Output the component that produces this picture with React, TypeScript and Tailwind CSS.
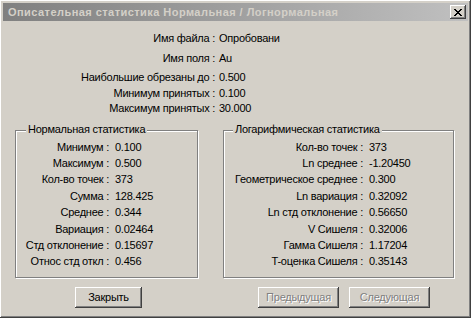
const raised =
  "shadow-[inset_-1px_-1px_0_#404040,inset_1px_1px_0_#ffffff,inset_-2px_-2px_0_#808080,inset_2px_2px_0_#d4d0c8]";

function Row({ label, value, w }: { label: string; value: string; w: string }) {
  return (
    <div className="flex h-[16.4px] items-center">
      <div className={`${w} text-right whitespace-nowrap`}>{label} :</div>
      <div className="pl-[6px] whitespace-nowrap">{value}</div>
    </div>
  );
}

function Group({
  title,
  rows,
  w,
  labelW,
  titleLeft,
}: {
  title: string;
  rows: [string, string][];
  w: string;
  labelW: string;
  titleLeft: string;
}) {
  return (
    <div
      className={`relative ${w} h-[148px] border border-[#808080] shadow-[inset_1px_1px_0_#ffffff,1px_1px_0_#ffffff] pt-[8px]`}
    >
      <div className={`absolute -top-[8px] ${titleLeft} px-[2px] bg-[#d4d0c8] whitespace-nowrap`}>
        {title}
      </div>
      {rows.map(([l, v]) => (
        <Row key={l} label={l} value={v} w={labelW} />
      ))}
    </div>
  );
}

function Button({ label, disabled, w }: { label: string; disabled?: boolean; w: string }) {
  return (
    <div
      className={`${w} h-[21px] flex items-center justify-center ${raised} ${
        disabled ? "text-[#808080] [text-shadow:1px_1px_0_#ffffff]" : "text-black"
      }`}
    >
      {label}
    </div>
  );
}

export default function App() {
  return (
    <div
      className={`w-[471px] h-[318px] bg-[#d4d0c8] p-[3px] flex flex-col text-[11px] leading-[13px] tracking-[-0.25px] text-black font-['Liberation_Sans',Arial,sans-serif] ${raised}`}
    >
      {/* Title bar (inactive) */}
      <div className="h-[18px] flex items-center justify-between bg-gradient-to-r from-[#808080] to-[#c0c0c0] pl-[5px] pr-[2px]">
        <span className="font-bold text-[#d4d0c8] whitespace-nowrap tracking-[0.45px]">
          Описательная статистика Нормальная / Логнормальная
        </span>
        <div className={`w-[16px] h-[14px] bg-[#d4d0c8] flex items-center justify-center ${raised}`}>
          <svg width="8" height="7" viewBox="0 0 8 7" shapeRendering="crispEdges">
            <path
              d="M0 0h2v1h-2zM6 0h2v1h-2zM1 1h2v1h-2zM5 1h2v1h-2zM2 2h4v1h-4zM3 3h2v1h-2zM2 4h4v1h-4zM1 5h2v1h-2zM5 5h2v1h-2zM0 6h2v1h-2zM6 6h2v1h-2z"
              fill="#000"
            />
          </svg>
        </div>
      </div>

      {/* File info */}
      <div className="flex flex-col mt-[10px]">
        <div className="flex h-[14px] items-center">
          <div className="w-[212px] text-right">Имя файла :</div>
          <div className="pl-[4px]">Опробовани</div>
        </div>
        <div className="flex h-[14px] items-center mt-[6px]">
          <div className="w-[212px] text-right">Имя поля :</div>
          <div className="pl-[4px]">Au</div>
        </div>
        <div className="flex h-[14px] items-center mt-[5px]">
          <div className="w-[212px] text-right">Наибольшие обрезаны до :</div>
          <div className="pl-[4px]">0.500</div>
        </div>
        <div className="flex h-[14px] items-center mt-[2px]">
          <div className="w-[212px] text-right">Минимум принятых :</div>
          <div className="pl-[4px]">0.100</div>
        </div>
        <div className="flex h-[14px] items-center mt-[1px]">
          <div className="w-[212px] text-right">Максимум принятых :</div>
          <div className="pl-[4px]">30.000</div>
        </div>
      </div>

      {/* Statistics groups */}
      <div className="flex mt-[15px] pl-[12px] gap-[25px]">
        <Group
          title="Нормальная статистика"
          w="w-[183px]"
          labelW="w-[93px]"
          titleLeft="left-[10px]"
          rows={[
            ["Минимум", "0.100"],
            ["Максимум", "0.500"],
            ["Кол-во точек", "373"],
            ["Сумма", "128.425"],
            ["Среднее", "0.344"],
            ["Вариация", "0.02464"],
            ["Стд отклонение", "0.15697"],
            ["Относ стд откл", "0.456"],
          ]}
        />
        <Group
          title="Логарифмическая статистика"
          w="w-[231px]"
          labelW="w-[139px]"
          titleLeft="left-[9px]"
          rows={[
            ["Кол-во точек", "373"],
            ["Ln среднее", "-1.20450"],
            ["Геометрическое среднее", "0.300"],
            ["Ln вариация", "0.32092"],
            ["Ln стд отклонение", "0.56650"],
            ["V Сишеля", "0.32006"],
            ["Гамма Сишеля", "1.17204"],
            ["T-оценка Сишеля", "0.35143"],
          ]}
        />
      </div>

      {/* Buttons */}
      <div className="flex mt-[9px] pl-[72px]">
        <Button label="Закрыть" w="w-[67px]" />
        <div className="flex gap-[10px] ml-[116px]">
          <Button label="Предыдущая" w="w-[81px]" disabled />
          <Button label="Следующая" w="w-[81px]" disabled />
        </div>
      </div>
    </div>
  );
}
